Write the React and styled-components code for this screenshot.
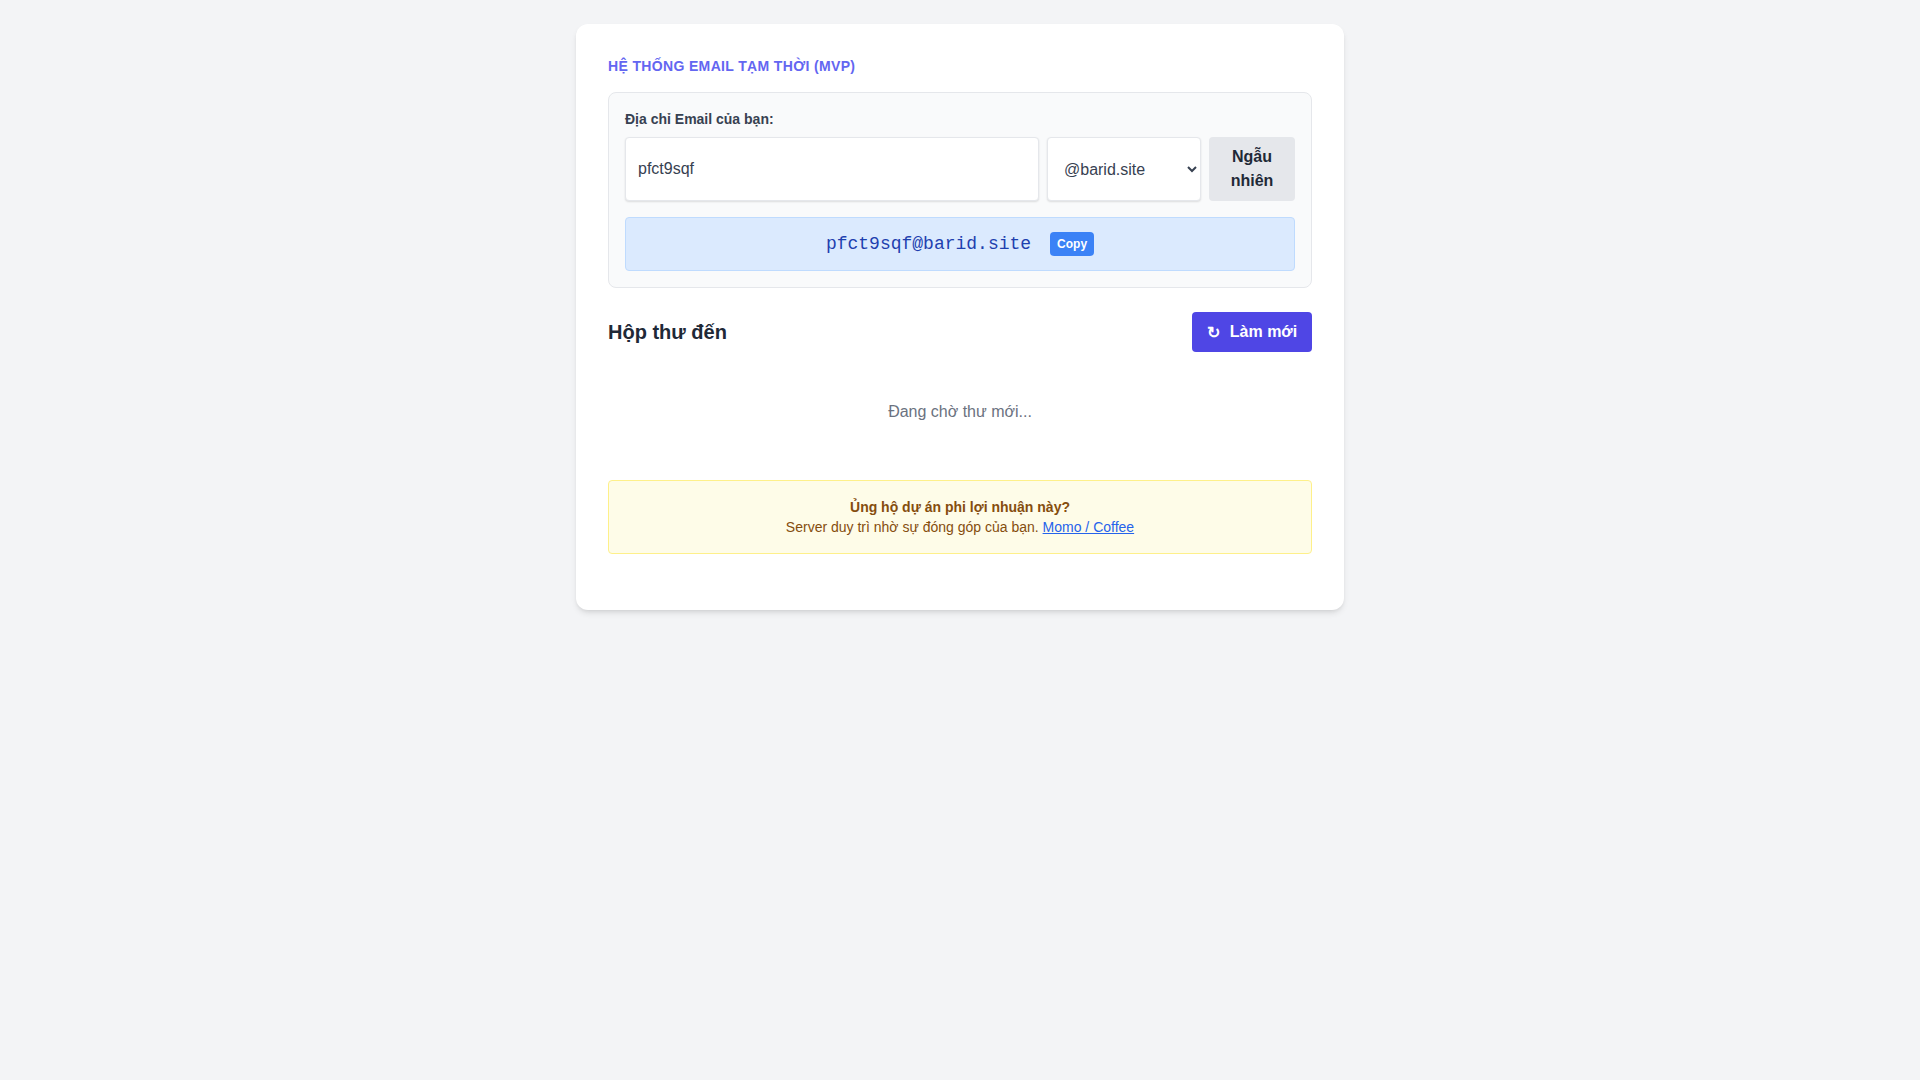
import styled, { createGlobalStyle } from "styled-components";
import { useState } from "react";

const GlobalStyle = createGlobalStyle`
  * { box-sizing: border-box; }
  body {
    margin: 0;
    background: #f3f4f6;
    font-family: "Liberation Sans", Arial, sans-serif;
    color: #1f2937;
  }
`;

const Page = styled.div`
  min-height: 100vh;
  padding: 24px 0;
`;

const Card = styled.div`
  width: 768px;
  margin: 0 auto;
  padding: 32px;
  background: #ffffff;
  border-radius: 12px;
  box-shadow: 0 4px 6px -1px rgba(0, 0, 0, 0.1), 0 2px 4px -2px rgba(0, 0, 0, 0.1);
`;

const Title = styled.h1`
  margin: 0 0 16px;
  font-size: 14px;
  line-height: 20px;
  font-weight: 700;
  letter-spacing: 0.025em;
  text-transform: uppercase;
  color: #6366f1;
`;

const AddressBox = styled.div`
  padding: 16px;
  background: #f9fafb;
  border: 1px solid #e5e7eb;
  border-radius: 8px;
`;

const Label = styled.label`
  display: block;
  margin-bottom: 8px;
  font-size: 14px;
  line-height: 20px;
  font-weight: 700;
  color: #374151;
`;

const Row = styled.div`
  display: flex;
  gap: 8px;
`;

const Input = styled.input`
  flex: 1;
  min-width: 0;
  padding: 0 12px;
  font-family: inherit;
  font-size: 16px;
  color: #374151;
  background: #fff;
  border: 1px solid #e5e7eb;
  border-radius: 4px;
  box-shadow: 0 1px 2px rgba(0, 0, 0, 0.12);
  outline: none;
`;

const Select = styled.select`
  width: 154px;
  padding: 0 6px 0 12px;
  font-family: inherit;
  font-size: 16px;
  color: #374151;
  background: #fff;
  border: 1px solid #e5e7eb;
  border-radius: 4px;
  box-shadow: 0 1px 2px rgba(0, 0, 0, 0.12);
  outline: none;
`;

const RandomButton = styled.button`
  width: 86px;
  padding: 8px 12px;
  font-family: inherit;
  font-size: 16px;
  line-height: 24px;
  font-weight: 700;
  color: #1f2937;
  background: #e5e7eb;
  border: none;
  border-radius: 4px;
  cursor: pointer;
`;

const Display = styled.div`
  margin-top: 16px;
  padding: 12px;
  display: flex;
  align-items: center;
  justify-content: center;
  gap: 19px;
  background: #dbeafe;
  border: 1px solid #bfdbfe;
  border-radius: 4px;
`;

const EmailText = styled.span`
  font-family: "Liberation Mono", "Courier New", monospace;
  font-size: 18px;
  line-height: 28px;
  color: #1e40af;
`;

const CopyButton = styled.button`
  height: 24px;
  padding: 0 7px;
  font-family: inherit;
  font-size: 12px;
  font-weight: 700;
  color: #fff;
  background: #3b82f6;
  border: none;
  border-radius: 4px;
  cursor: pointer;
`;

const InboxHeader = styled.div`
  margin: 24px 0 16px;
  display: flex;
  align-items: center;
  justify-content: space-between;
`;

const InboxTitle = styled.h2`
  margin: 0;
  font-size: 20px;
  line-height: 28px;
  font-weight: 700;
  color: #1f2937;
`;

const RefreshButton = styled.button`
  height: 40px;
  width: 120px;
  display: inline-flex;
  align-items: center;
  justify-content: center;
  gap: 10px;
  font-family: inherit;
  font-size: 16px;
  font-weight: 700;
  color: #fff;
  background: #4f46e5;
  border: none;
  border-radius: 4px;
  cursor: pointer;
`;

const Empty = styled.p`
  margin: 0;
  padding: 32px 0;
  text-align: center;
  font-size: 16px;
  line-height: 24px;
  color: #6b7280;
`;

const Support = styled.div`
  margin: 24px 0;
  padding: 16px;
  text-align: center;
  font-size: 14px;
  line-height: 20px;
  color: #854d0e;
  background: #fefce8;
  border: 1px solid #fef08a;
  border-radius: 4px;
`;

const SupportLink = styled.a`
  color: #2563eb;
  text-decoration: underline;
`;

const App = () => {
  const [name, setName] = useState("pfct9sqf");
  const [domain, setDomain] = useState("@barid.site");

  return (
    <>
      <GlobalStyle />
      <Page>
        <Card>
          <Title>Hệ thống Email Tạm thời (MVP)</Title>
          <AddressBox>
            <Label>Địa chỉ Email của bạn:</Label>
            <Row>
              <Input value={name} onChange={(e) => setName(e.target.value)} />
              <Select value={domain} onChange={(e) => setDomain(e.target.value)}>
                <option>@barid.site</option>
              </Select>
              <RandomButton>Ngẫu nhiên</RandomButton>
            </Row>
            <Display>
              <EmailText>{name + domain}</EmailText>
              <CopyButton>Copy</CopyButton>
            </Display>
          </AddressBox>

          <InboxHeader>
            <InboxTitle>Hộp thư đến</InboxTitle>
            <RefreshButton>
              <span>↻</span>
              <span>Làm mới</span>
            </RefreshButton>
          </InboxHeader>
          <Empty>Đang chờ thư mới...</Empty>

          <Support>
            <b>Ủng hộ dự án phi lợi nhuận này?</b>
            <br />
            Server duy trì nhờ sự đóng góp của bạn.{" "}
            <SupportLink href="#">Momo / Coffee</SupportLink>
          </Support>
        </Card>
      </Page>
    </>
  );
};

export default App;
